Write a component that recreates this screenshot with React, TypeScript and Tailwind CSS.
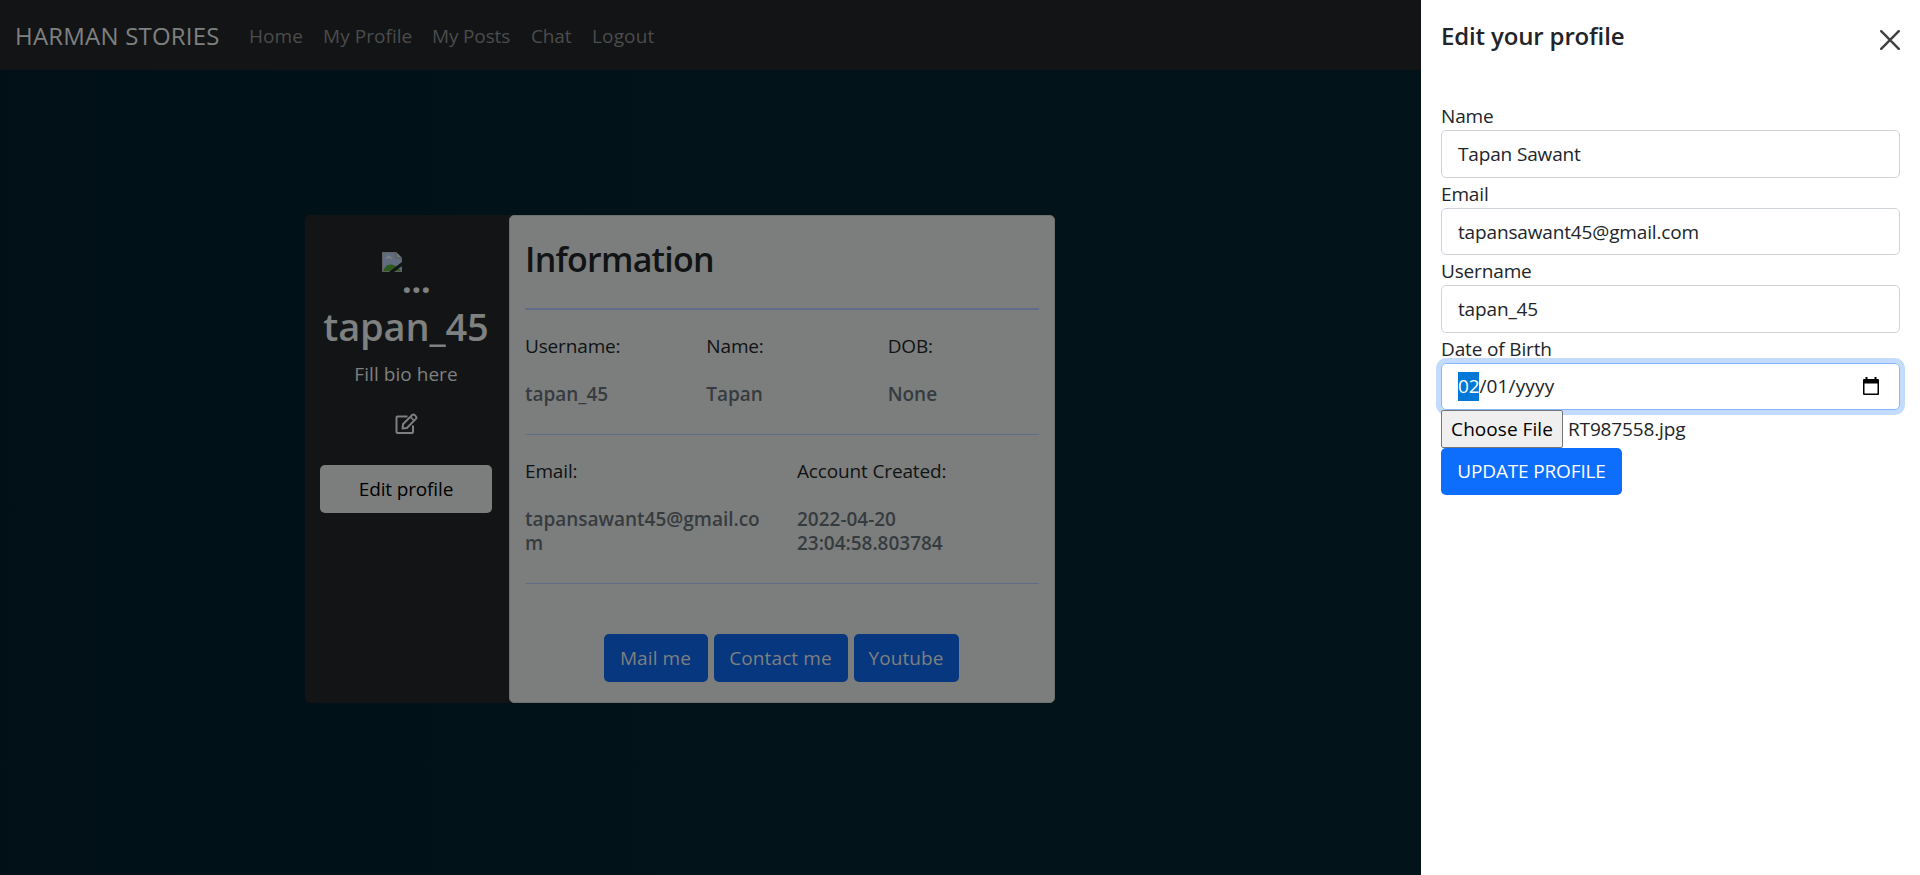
import React from 'react';

function BrokenImage() {
  return (
    <svg width="20" height="20" viewBox="0 0 20 20" className="shrink-0">
      <path d="M0 0h14l6 6v14H0z" fill="#616161" />
      <path d="M1 1h12.500L19 6.500V19H1z" fill="#616b80" />
      <path d="M3 6.500c0-1.200 1.300-1.500 1.800-1.300C5.500 3 8 3 8.600 5c1.200-.2 1.900.5 1.900 1.500z" fill="#7e8080" />
      <path d="M1 19c2-5 5-7 8.500-6.500S16 15 19 19z" fill="#2a5a1c" />
      <path d="M14 0v6h6z" fill="#777" stroke="#555" strokeWidth="1" />
      <path d="M20 10v4l-8 6H7z" fill="#131415" />
    </svg>
  );
}

function EditIcon() {
  return (
    <svg width="24" height="22" viewBox="0 0 24 22" fill="none" stroke="#7e7f7f" strokeWidth="2" strokeLinejoin="round">
      <path d="M12.500 3.500H2.500a1 1 0 0 0-1 1V19a1 1 0 0 0 1 1H17a1 1 0 0 0 1-1v-6.500" />
      <path d="M7.500 15.500l.6-4.500 9.400-9.200c1.300-1.100 5 2 3.600 3.800L11.900 15z" strokeWidth="2" />
      <path d="M15.500 4l3.500 3.500" strokeWidth="1.700" />
    </svg>
  );
}

function CalendarIcon() {
  return (
    <svg width="16" height="19" viewBox="0 0 16 19">
      <path d="M2.500 0h2v2h7V0h2v2H15a1 1 0 0 1 1 1v14a1 1 0 0 1-1 1H1a1 1 0 0 1-1-1V3a1 1 0 0 1 1-1h1.500zM1.500 6.500v10h13v-10z" fill="#000" fillRule="evenodd" />
    </svg>
  );
}

function Fact({ label, children }: { label: string; children: React.ReactNode }) {
  return (
    <div>
      <p className="leading-6 text-[#101214]">{label}</p>
      <div className="mt-[24px] font-semibold leading-6 tracking-[-0.02px] text-[#363b3f]">{children}</div>
    </div>
  );
}

function Field({ label, value }: { label: string; value: string }) {
  return (
    <label className="block">
      <span className="block h-[30px] pt-px leading-[30px]">{label}</span>
      <span className="flex h-[47.67px] items-center rounded-[5px] border border-[#ced4da] px-4 pt-px">{value}</span>
    </label>
  );
}

export default function App() {
  return (
    <div className="flex h-[875px] w-[1920px] overflow-hidden font-['Open_Sans',sans-serif] text-[19px] tracking-[-0.15px]">
      <main className="flex w-[1421px] flex-col bg-linear-to-r from-[#011017] via-[#02131a] to-[#021319]">
        <nav className="flex h-[70px] shrink-0 items-center bg-[#131415] pl-[15px] pt-[2px] text-[#4b4c4d]">
          <span className="w-[234px] text-[24px] tracking-[0.2px] text-[#7f8080]">HARMAN STORIES</span>
          <span className="w-[74px] tracking-[0.05px]">Home</span>
          <span className="w-[109px] tracking-[0.05px]">My Profile</span>
          <span className="w-[99px]">My Posts</span>
          <span className="w-[61px]">Chat</span>
          <span className="tracking-[0.15px]">Logout</span>
        </nav>
        <section className="ml-[305px] mt-[145px] flex h-[488px] w-[750px] rounded-[5px] bg-[#131415]">
          <aside className="flex w-[204px] flex-col items-center pl-[15px] pr-[17px] text-[#7f8080]">
            <div className="mt-[37px] flex h-[48px] w-[48px]">
              <BrokenImage />
              <span className="pt-[12px] text-[34px] font-bold leading-[32px]">...</span>
            </div>
            <h1 className="mt-[2px] whitespace-nowrap text-[38px] font-semibold leading-[48px]">tapan_45</h1>
            <p className="mt-[9px] leading-[30px] tracking-[0.05px]">Fill bio here</p>
            <div className="ml-px mt-[24px]"><EditIcon /></div>
            <button className="mt-[30px] h-[48px] w-[172px] rounded-[5px] bg-[#7c7e7d] text-black">Edit profile</button>
          </aside>
          <div className="w-[546px] rounded-[5px] border border-[#6d6f6e] bg-[#7c7e7d] px-[15px]">
            <h2 className="h-[94px] border-b-2 border-[#5f6d88] pt-[22px] text-[34px] font-semibold leading-[42px] tracking-[-0.75px] text-[#111315]">Information</h2>
            <div className="grid h-[125px] grid-cols-3 gap-x-[30px] border-b border-[#5f6d88] pt-[24px]">
              <Fact label="Username:">tapan_45</Fact>
              <Fact label="Name:">Tapan</Fact>
              <Fact label="DOB:">None</Fact>
            </div>
            <div className="grid h-[149px] grid-cols-2 gap-x-[30px] border-b border-[#5f6d88] pt-[24px]">
              <Fact label="Email:">tapansawant45@gmail.co<br />m</Fact>
              <Fact label="Account Created:">2022-04-20<br />23:04:58.803784</Fact>
            </div>
            <div className="mt-[50px] flex justify-center gap-[6px] pr-[2px] tracking-[0.1px] text-[#7f8080]">
              <button className="h-[48px] w-[104px] rounded-[5px] bg-[#07377f] pt-px">Mail me</button>
              <button className="h-[48px] w-[134px] rounded-[5px] bg-[#07377f] pt-px">Contact me</button>
              <button className="h-[48px] w-[105px] rounded-[5px] bg-[#07377f] pt-px">Youtube</button>
            </div>
          </div>
        </section>
      </main>
      <aside className="w-[499px] bg-white px-5 text-[#212529]">
        <header className="flex h-[100px] items-start justify-between">
          <h2 className="pt-[18px] text-[24px] font-semibold leading-9">Edit your profile</h2>
          <svg width="20" height="20" viewBox="0 0 20 20" className="mt-[30px]" stroke="#404040" strokeWidth="2.400" strokeLinecap="round">
            <path d="M1.200 1.200l17.600 17.600M18.800 1.200L1.200 18.800" />
          </svg>
        </header>
        <Field label="Name" value="Tapan Sawant" />
        <Field label="Email" value="tapansawant45@gmail.com" />
        <Field label="Username" value="tapan_45" />
        <span className="block h-[30px] pt-px leading-[30px]">Date of Birth</span>
        <div className="flex h-[47px] items-center rounded-[5px] border border-[#86b7fe] px-4 shadow-[0_0_0_5px_#c2dbfe]">
          <span className="bg-[#0078d7] text-white">02</span><span className="tracking-[0.15px]">/01/yyyy</span>
          <span className="ml-auto mr-[4px]"><CalendarIcon /></span>
        </div>
        <div className="relative flex h-[38px] items-center">
          <button className="h-[38px] w-[122px] rounded-[2px] border border-[#767676] bg-[#efefef] pt-px tracking-[0.05px] text-black">Choose File</button>
          <span className="ml-[5px] pt-px">RT987558.jpg</span>
        </div>
        <button className="h-[47px] w-[181px] rounded-[5px] bg-[#0d6efd] text-white">UPDATE PROFILE</button>
      </aside>
    </div>
  );
}
